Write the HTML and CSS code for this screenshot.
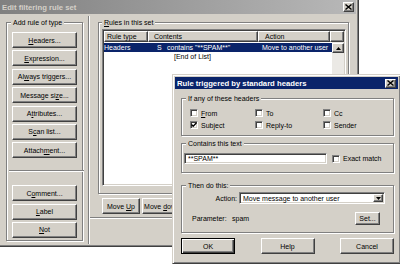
FILE: index.html
```html
<!DOCTYPE html>
<html lang="en">
  <head>
    <meta charset="UTF-8" />
    <title>Edit filtering rule set</title>
    <link rel="stylesheet" href="styles.css">
  </head>
  <body>
    <div class="win main-win">
      <div class="titlebar inactive">
        <span class="title">Edit filtering rule set</span>
        <span class="cap-btn">
          <svg width="7" height="6" viewBox="0 0 7 6"><path d="M0.5 0.5L6.5 5.5M6.5 0.5L0.5 5.5" stroke="#000" stroke-width="1.4"/></svg>
        </span>
      </div>
      <div class="main-body">
        <div class="left-pane">
          <div class="group add-group">
            <div class="group-title">Add rule of type</div>
            <div class="btn-col">
              <button class="btn"><u>H</u>eaders...</button>
              <button class="btn"><u>E</u>xpression...</button>
              <button class="btn">Al<u>w</u>ays triggers...</button>
              <button class="btn">Message si<u>z</u>e...</button>
              <button class="btn">A<u>t</u>tributes...</button>
              <button class="btn">S<u>c</u>an list...</button>
              <button class="btn">Attach<u>m</u>ent...</button>
              <div class="hsep"></div>
              <button class="btn">C<u>o</u>mment...</button>
              <button class="btn"><u>L</u>abel</button>
              <button class="btn"><u>N</u>ot</button>
            </div>
          </div>
        </div>
        <div class="vsep"></div>
        <div class="right-pane">
          <div class="rules-area">
            <div class="group rules-group">
              <div class="group-title"><u>R</u>ules in this set</div>
              <div class="listview">
                <div class="lv-head">
                  <div class="hc col-type">Rule type</div>
                  <div class="hc col-contents">Contents</div>
                  <div class="hc col-action">Action</div>
                  <div class="hc col-fill"></div>
                </div>
                <div class="lv-body">
                  <div class="lv-rows">
                    <div class="lv-row selected">
                      <div class="rc col-type">Headers</div>
                      <div class="rc col-contents"><span class="flag">S</span>contains "**SPAM**"</div>
                      <div class="rc col-action">Move to another user</div>
                    </div>
                    <div class="lv-row">
                      <div class="rc end-mark">[End of List]</div>
                    </div>
                  </div>
                  <div class="vscroll">
                    <div class="sb-btn">
                      <svg width="5" height="3" viewBox="0 0 5 3"><path d="M0 3L2.5 0L5 3Z" fill="#000"/></svg>
                    </div>
                  </div>
                </div>
              </div>
            </div>
            <div class="move-row">
              <button class="btn move-up">Move <u>U</u>p</button>
              <button class="btn move-down">Move <u>d</u>own</button>
            </div>
          </div>
          <div class="hsep wide"></div>
        </div>
      </div>
    </div>

    <div class="win dialog">
      <div class="titlebar active">
        <span class="title">Rule triggered by standard headers</span>
        <span class="cap-btn">
          <svg width="7" height="6" viewBox="0 0 7 6"><path d="M0.5 0.5L6.5 5.5M6.5 0.5L0.5 5.5" stroke="#000" stroke-width="1.4"/></svg>
        </span>
      </div>
      <div class="dlg-body">
        <div class="group grp-headers">
          <div class="group-title">If any of these headers</div>
          <div class="check-grid">
            <label class="check"><span class="box"></span><span><u>F</u>rom</span></label>
            <label class="check"><span class="box"></span><span>To</span></label>
            <label class="check"><span class="box"></span><span>Cc</span></label>
            <label class="check"><span class="box"><svg width="6" height="6" viewBox="0 0 6 6"><path d="M0.5 2.5L2.2 4.3L5.5 0.8" stroke="#000" stroke-width="1.3" fill="none"/></svg></span><span>Subject</span></label>
            <label class="check"><span class="box"></span><span>Reply-to</span></label>
            <label class="check"><span class="box"></span><span>Sender</span></label>
          </div>
        </div>

        <div class="group grp-text">
          <div class="group-title">Contains this text</div>
          <div class="text-row">
            <div class="field text-field">**SPAM**</div>
            <label class="check"><span class="box"></span><span>Exact match</span></label>
          </div>
        </div>

        <div class="group grp-then">
          <div class="group-title">Then do this:</div>
          <div class="action-row">
            <span class="action-label">Action:</span>
            <div class="field select">
              <span class="select-text">Move message to another user</span>
              <span class="drop-btn">
                <svg width="5" height="3" viewBox="0 0 5 3"><path d="M0 0L2.5 3L5 0Z" fill="#000"/></svg>
              </span>
            </div>
          </div>
          <div class="param-row">
            <span class="param-label">Parameter:</span>
            <span class="param-value">spam</span>
            <button class="btn set-btn">Set...</button>
          </div>
        </div>

        <div class="dlg-buttons">
          <button class="btn default">OK</button>
          <button class="btn">Help</button>
          <button class="btn">Cancel</button>
        </div>
      </div>
    </div>
  </body>
</html>
```

FILE: styles.css
```css
* {
  box-sizing: border-box;
}
html,
body {
  margin: 0;
  padding: 0;
}
body {
  width: 400px;
  height: 265px;
  overflow: hidden;
  position: relative;
  background-color: #fff;
  font-family: "Liberation Sans", Arial, sans-serif;
  font-size: 7px;
  color: #000;
}
u {
  text-decoration-thickness: 1px;
  text-underline-offset: 1px;
}

/* windows */
.win {
  position: absolute;
  display: flex;
  flex-direction: column;
  background-color: #d4d0c8;
  border: 1px solid;
  border-color: #d4d0c8 #404040 #404040 #d4d0c8;
  box-shadow: inset 1px 1px #fff, inset -1px -1px #808080;
  padding: 2px;
}
.main-win {
  left: -3px;
  top: -3px;
  width: 362px;
  height: 250px;
}
.dialog {
  left: 172px;
  top: 74px;
  width: 229px;
  height: 190px;
}
.titlebar {
  display: flex;
  align-items: center;
  padding: 0 2px 0 2px;
  font-weight: bold;
  font-size: 7.7px;
  color: #fff;
}
.titlebar.inactive {
  height: 14px;
  color: #d4d0c8;
  background: linear-gradient(to right, #808080, #b8b8b8);
}
.titlebar.active {
  height: 12px;
  background-color: #0a246a;
}
.titlebar .title {
  flex: 1;
}
.cap-btn {
  width: 11px;
  height: 10px;
  display: flex;
  align-items: center;
  justify-content: center;
  background-color: #d4d0c8;
  border: 1px solid;
  border-color: #fff #404040 #404040 #fff;
  box-shadow: inset -1px -1px #808080;
}
.active .cap-btn {
  height: 9px;
}

/* common controls */
.btn {
  display: block;
  height: 16px;
  line-height: 14px;
  text-align: center;
  white-space: nowrap;
  padding: 0;
  margin: 0;
  font: inherit;
  color: #000;
  background-color: #d4d0c8;
  border: 1px solid;
  border-color: #fff #404040 #404040 #fff;
  box-shadow: inset -1px -1px #808080;
}
.btn.default {
  border-color: #000;
  box-shadow: inset 1px 1px #fff, inset -1px -1px #404040, inset -2px -2px #808080;
}
.group {
  border: 1px solid #808080;
  box-shadow: inset 1px 1px #fff, 1px 1px #fff;
}
.group-title {
  display: table;
  height: 9px;
  line-height: 9px;
  margin: -5px 0 0 4px;
  padding: 0 2px;
  background-color: #d4d0c8;
}
.hsep {
  height: 2px;
  border-top: 1px solid #808080;
  border-bottom: 1px solid #fff;
}
.field {
  background-color: #fff;
  border: 1px solid;
  border-color: #808080 #fff #fff #808080;
  box-shadow: inset 1px 1px #404040, inset -1px -1px #d4d0c8;
}
.check {
  display: flex;
  align-items: center;
  gap: 3px;
  white-space: nowrap;
}
.box {
  flex: none;
  width: 8px;
  height: 8px;
  display: flex;
  align-items: center;
  justify-content: center;
  background-color: #fff;
  border: 1px solid;
  border-color: #808080 #fff #fff #808080;
  box-shadow: inset 1px 1px #404040, inset -1px -1px #d4d0c8;
}

/* main window */
.main-body {
  flex: 1;
  display: flex;
}
.left-pane {
  width: 88px;
  padding: 8px 0 0 6px;
}
.add-group {
  width: 77px;
  height: 219px;
}
.btn-col {
  display: flex;
  flex-direction: column;
  gap: 2.4px;
  padding: 5px 0 0 5px;
}
.btn-col .btn {
  width: 65px;
}
.btn-col .hsep {
  margin: 9px -2px 11px -3px;
}
.vsep {
  width: 2px;
  margin-top: 2px;
  border-left: 1px solid #808080;
  border-right: 1px solid #fff;
}
.right-pane {
  flex: 1;
  display: flex;
  flex-direction: column;
}
.rules-area {
  padding: 8px 0 0 8px;
}
.rules-group {
  width: 251px;
  height: 172px;
}
.rules-group .group-title {
  margin-left: 3px;
}
.listview {
  width: 244px;
  height: 157px;
  margin: 2px 0 0 3px;
  display: flex;
  flex-direction: column;
  background-color: #fff;
  border: 1px solid;
  border-color: #808080 #fff #fff #808080;
  box-shadow: inset 1px 1px #404040, inset -1px -1px #d4d0c8;
  padding: 1px;
}
.lv-head {
  display: flex;
  height: 11px;
}
.hc {
  height: 11px;
  line-height: 9px;
  background-color: #d4d0c8;
  border: 1px solid;
  border-color: #fff #404040 #404040 #fff;
  box-shadow: inset -1px -1px #808080;
  white-space: nowrap;
}
.col-type {
  width: 44px;
  padding-left: 2px;
}
.col-contents {
  width: 110px;
  padding-left: 5px;
}
.col-action {
  width: 72px;
  padding-left: 6px;
}
.col-fill {
  flex: 1;
}
.lv-body {
  flex: 1;
  display: flex;
}
.lv-rows {
  flex: 1;
}
.lv-row {
  display: flex;
  height: 9px;
  line-height: 9px;
  white-space: nowrap;
}
.lv-row.selected {
  margin-top: 1px;
  background-color: #0a246a;
  color: #fff;
}
.rc.col-type {
  padding-left: 0;
}
.rc.col-contents {
  padding-left: 9px;
}
.rc.col-action {
  padding-left: 4px;
}
.flag {
  display: inline-block;
  width: 10px;
}
.end-mark {
  padding-left: 70px;
}
.vscroll {
  width: 12px;
  padding-top: 1px;
  background-color: #ebe9e5;
}
.sb-btn {
  height: 10px;
  display: flex;
  align-items: center;
  justify-content: center;
  background-color: #d4d0c8;
  border: 1px solid;
  border-color: #fff #404040 #404040 #fff;
  box-shadow: inset -1px -1px #808080;
}
.move-row {
  display: flex;
  gap: 2px;
  padding: 4px 0 0 4px;
}
.move-up {
  width: 38px;
}
.move-down {
  width: 40px;
}
.hsep.wide {
  margin-top: 3px;
}

/* dialog */
.dlg-body {
  flex: 1;
  display: flex;
  flex-direction: column;
  padding: 0 4px 0 6px;
}
.grp-headers {
  margin-top: 9px;
}
.check-grid {
  display: grid;
  grid-template-columns: 65px 68px 1fr;
  grid-auto-rows: 12px;
  margin-top: 4px;
  padding: 0 0 4px 8px;
}
.grp-text {
  margin-top: 7px;
}
.text-row {
  display: flex;
  align-items: center;
  margin-top: 5px;
  padding: 0 0 8px 2px;
}
.text-field {
  width: 143px;
  height: 11px;
  line-height: 9px;
  padding-left: 3px;
  margin-right: 5px;
}
.grp-then {
  margin-top: 12px;
}
.action-row {
  display: flex;
  align-items: center;
  margin-top: 2px;
}
.action-label {
  width: 55px;
  text-align: right;
  margin-right: 2px;
}
.select {
  width: 146px;
  height: 12px;
  display: flex;
  align-items: center;
  padding: 1px;
}
.select-text {
  flex: 1;
  padding-left: 2px;
}
.drop-btn {
  width: 10px;
  height: 8px;
  display: flex;
  align-items: center;
  justify-content: center;
  background-color: #d4d0c8;
  border: 1px solid;
  border-color: #fff #404040 #404040 #fff;
  box-shadow: inset -1px -1px #808080;
}
.param-row {
  display: flex;
  align-items: center;
  margin-top: 8px;
  padding: 0 13px 7px 10px;
}
.param-label {
  width: 40px;
}
.param-value {
  flex: 1;
}
.set-btn {
  width: 25px;
  height: 13px;
  line-height: 11px;
}
.dlg-buttons {
  display: flex;
  justify-content: space-between;
  margin-top: 5px;
}
.dlg-buttons .btn {
  width: 54px;
}
```
